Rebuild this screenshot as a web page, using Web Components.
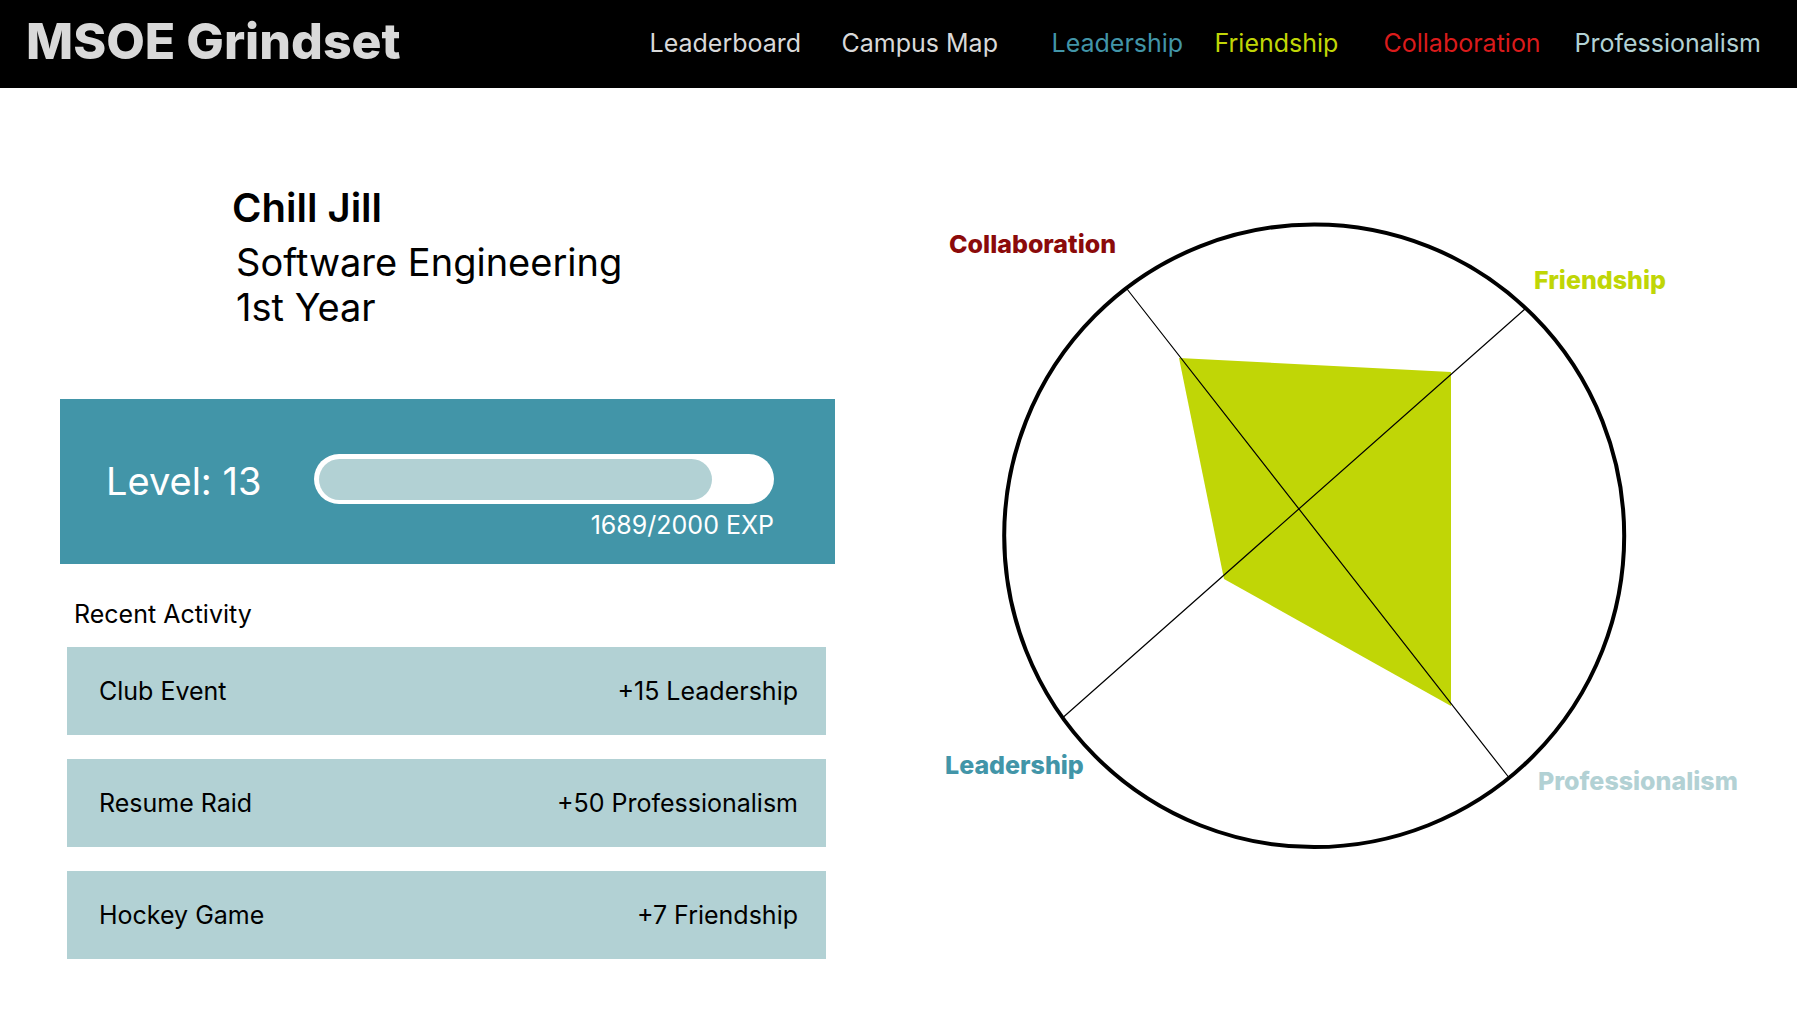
<!DOCTYPE html>
<html lang="en">
<head>
<meta charset="utf-8">
<title>MSOE Grindset</title>
<style>
  :root {
    --teal: #4295a8;
    --mist: #b2d1d4;
    --lime: #c0d606;
    --red: #da1b1b;
    --maroon: #8b0a0a;
    --silver: #d9d9d9;
  }
  body { margin: 0; background: #fff; color: #000; font-family: Inter, "Liberation Sans", sans-serif; font-size: 25px; line-height: 30px; }
</style>
</head>
<body>
<grind-app></grind-app>

<template id="t-app">
  <style>
    :host { display: block; }
    main { display: grid; grid-template-columns: 775fr 835fr; column-gap: 90px; align-items: start; padding: 94px 37px 0 60px; }
    skill-chart { margin-top: 18px; }
    level-panel { margin-top: 69px; }
    activity-list { margin-top: 35px; }
  </style>
  <site-header></site-header>
  <main>
    <section>
      <user-profile>
        <span slot="name">Chill Jill</span>
        <span slot="major">Software Engineering</span>
        <span slot="year">1st Year</span>
      </user-profile>
      <level-panel level="13" exp="1689" goal="2000"></level-panel>
      <activity-list>
        <activity-row>Club Event<span slot="reward">+15 Leadership</span></activity-row>
        <activity-row>Resume Raid<span slot="reward">+50 Professionalism</span></activity-row>
        <activity-row>Hockey Game<span slot="reward">+7 Friendship</span></activity-row>
      </activity-list>
    </section>
    <skill-chart></skill-chart>
  </main>
</template>

<template id="t-header">
  <style>
    :host { display: flex; justify-content: space-between; align-items: flex-start; box-sizing: border-box; min-height: 88px; padding: 11px 36px 0 26px; background: #000; color: var(--silver); }
    h1 { margin: 0; font-size: 50px; line-height: 60px; font-weight: 800; white-space: nowrap; }
    nav { display: grid; grid-template-columns: 192px 210px 163px 169px 191px auto; line-height: 64px; white-space: nowrap; }
    a { color: inherit; text-decoration: none; }
    .leadership { color: var(--teal); }
    .friendship { color: var(--lime); }
    .collaboration { color: var(--red); }
    .professionalism { color: var(--mist); }
  </style>
  <h1>MSOE Grindset</h1>
  <nav>
    <a href="#leaderboard">Leaderboard</a>
    <a href="#map">Campus Map</a>
    <a class="leadership" href="#leadership">Leadership</a>
    <a class="friendship" href="#friendship">Friendship</a>
    <a class="collaboration" href="#collaboration">Collaboration</a>
    <a class="professionalism" href="#professionalism">Professionalism</a>
  </nav>
</template>

<template id="t-profile">
  <style>
    :host { display: block; padding-left: 176px; font-size: 38px; line-height: 45px; }
    h2 { margin: 0 0 6px -4px; font-size: 40px; line-height: 52px; font-weight: 600; }
    p { margin: 0; }
  </style>
  <h2><slot name="name"></slot></h2>
  <p><slot name="major"></slot></p>
  <p><slot name="year"></slot></p>
</template>

<template id="t-level">
  <style>
    :host { display: grid; grid-template-columns: 208px 1fr; row-gap: 2px; align-items: start; padding: 55px 61px 24px 46px; background: var(--teal); color: #fff; }
    .level { font-size: 38px; line-height: 54px; }
    .track { box-sizing: border-box; height: 50px; padding: 5px 5px 4px; border-radius: 25px; background: #fff; }
    .fill { height: 41px; border-radius: 21px; background: var(--mist); }
    .exp { grid-column: 2; text-align: right; }
  </style>
  <div class="level"></div>
  <div class="track" role="progressbar" aria-label="Experience" aria-valuemin="0"><div class="fill"></div></div>
  <div class="exp"></div>
</template>

<template id="t-list">
  <style>
    :host { display: block; }
    h3 { margin: 0 0 18px 14px; font: inherit; }
    .rows { display: grid; gap: 24px; margin: 0 9px 0 7px; }
  </style>
  <h3>Recent Activity</h3>
  <div class="rows"><slot></slot></div>
</template>

<template id="t-row">
  <style>
    :host { display: flex; align-items: center; justify-content: space-between; min-height: 88px; padding: 0 28px 0 32px; background: var(--mist); }
  </style>
  <span><slot></slot></span>
  <slot name="reward"></slot>
</template>

<template id="t-chart">
  <style>
    :host { display: block; }
    svg { display: block; width: 100%; height: auto; overflow: visible; }
    text { font-size: 25px; font-weight: 800; }
  </style>
  <svg viewBox="0 0 835 670" role="img" aria-label="Skill balance">
    <polygon points="254,158 526,172 526,506 299,379" fill="var(--lime)"/>
    <g fill="none" stroke="#000">
      <path d="M202 89 583.5 577M600 109 138.5 517" stroke-width="1.2"/>
      <ellipse cx="389.2" cy="335.8" rx="310" ry="311.3" stroke-width="4"/>
    </g>
    <text x="24" y="53" fill="var(--maroon)">Collaboration</text>
    <text x="609" y="89" fill="var(--lime)">Friendship</text>
    <text x="20" y="574" fill="var(--teal)">Leadership</text>
    <text x="613" y="590" fill="var(--mist)">Professionalism</text>
  </svg>
</template>

<script>
  class TemplateElement extends HTMLElement {
    constructor() {
      super();
      this.attachShadow({ mode: 'open' });
      this.shadowRoot.append(document.getElementById(this.constructor.template).content.cloneNode(true));
    }
  }
  class SiteHeader extends TemplateElement { static template = 't-header'; }
  class UserProfile extends TemplateElement { static template = 't-profile'; }
  class ActivityList extends TemplateElement { static template = 't-list'; }
  class ActivityRow extends TemplateElement { static template = 't-row'; }
  class SkillChart extends TemplateElement { static template = 't-chart'; }
  class GrindApp extends TemplateElement { static template = 't-app'; }
  class LevelPanel extends TemplateElement {
    static template = 't-level';
    connectedCallback() {
      const exp = Number(this.getAttribute('exp'));
      const goal = Number(this.getAttribute('goal'));
      const root = this.shadowRoot;
      root.querySelector('.level').textContent = `Level: ${this.getAttribute('level')}`;
      root.querySelector('.exp').textContent = `${exp}/${goal} EXP`;
      const track = root.querySelector('.track');
      track.setAttribute('aria-valuenow', exp);
      track.setAttribute('aria-valuemax', goal);
      // The rounded cap reaches past the exact share by part of its radius.
      root.querySelector('.fill').style.width = `calc(${exp / goal * 100}% + 13px)`;
    }
  }
  customElements.define('site-header', SiteHeader);
  customElements.define('user-profile', UserProfile);
  customElements.define('level-panel', LevelPanel);
  customElements.define('activity-row', ActivityRow);
  customElements.define('activity-list', ActivityList);
  customElements.define('skill-chart', SkillChart);
  customElements.define('grind-app', GrindApp);
</script>
</body>
</html>
